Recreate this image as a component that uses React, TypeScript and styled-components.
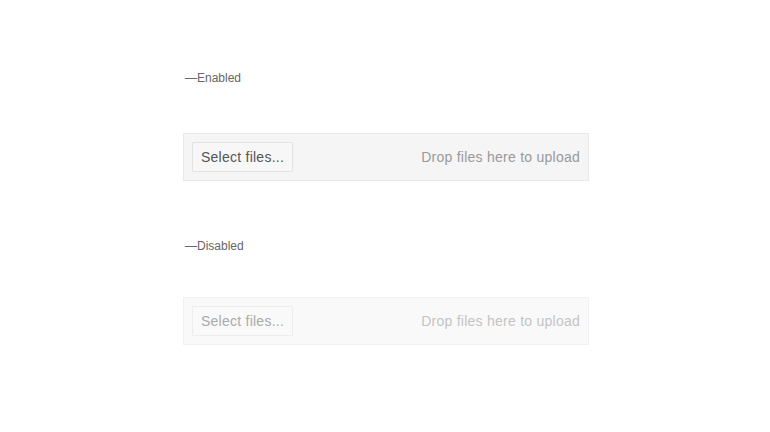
import { memo } from 'react';
import styled, { createGlobalStyle } from 'styled-components';

const GlobalStyle = createGlobalStyle`
  html, body {
    margin: 0;
    padding: 0;
    background: #ffffff;
    font-family: 'Liberation Sans', Arial, sans-serif;
  }
`;

const SPage = styled.main`
  width: 406px;
  margin-left: calc(50% - 202px);
  padding-top: 70px;
  display: flex;
  flex-direction: column;
`;

const SSection = styled.section<{ $gap: number; $after: number }>`
  display: flex;
  flex-direction: column;
  gap: ${(p) => p.$gap}px;
  margin-bottom: ${(p) => p.$after}px;
`;

const SLabel = styled.div`
  padding-left: 2px;
  font-size: 12px;
  line-height: 16px;
  color: #666;
`;

const SDropzone = styled.div<{ $disabled?: boolean }>`
  box-sizing: border-box;
  height: 48px;
  display: flex;
  align-items: center;
  justify-content: space-between;
  padding: 0 8px 0 8px;
  background: ${(p) => (p.$disabled ? '#f9f9f9' : '#f5f5f5')};
  border: 1px solid ${(p) => (p.$disabled ? '#f1f1f1' : '#e9e9e9')};
`;

const SButton = styled.button`
  box-sizing: border-box;
  height: 30px;
  width: 101px;
  padding: 0;
  font-family: inherit;
  font-size: 14px;
  letter-spacing: 0.25px;
  color: #555;
  background: #f7f7f7;
  border: 1px solid #e2e2e2;
  border-radius: 1px;
  cursor: pointer;

  &:disabled {
    color: #aaa;
    background: #f9f9f9;
    border-color: #ededed;
    cursor: default;
  }
`;

const SHint = styled.span<{ $disabled?: boolean }>`
  font-size: 14px;
  letter-spacing: 0.25px;
  color: ${(p) => (p.$disabled ? '#c4c4c4' : '#999')};
`;

const Uploader = ({ disabled }: { disabled?: boolean }) => (
  <SDropzone $disabled={disabled}>
    <SButton type='button' disabled={disabled}>
      Select files...
    </SButton>
    <SHint $disabled={disabled}>Drop files here to upload</SHint>
  </SDropzone>
);

const App = () => (
  <>
    <GlobalStyle />
    <SPage>
      <SSection $gap={47} $after={57}>
        <SLabel>—Enabled</SLabel>
        <Uploader />
      </SSection>
      <SSection $gap={43} $after={0}>
        <SLabel>—Disabled</SLabel>
        <Uploader disabled />
      </SSection>
    </SPage>
  </>
);

export default memo(App);
